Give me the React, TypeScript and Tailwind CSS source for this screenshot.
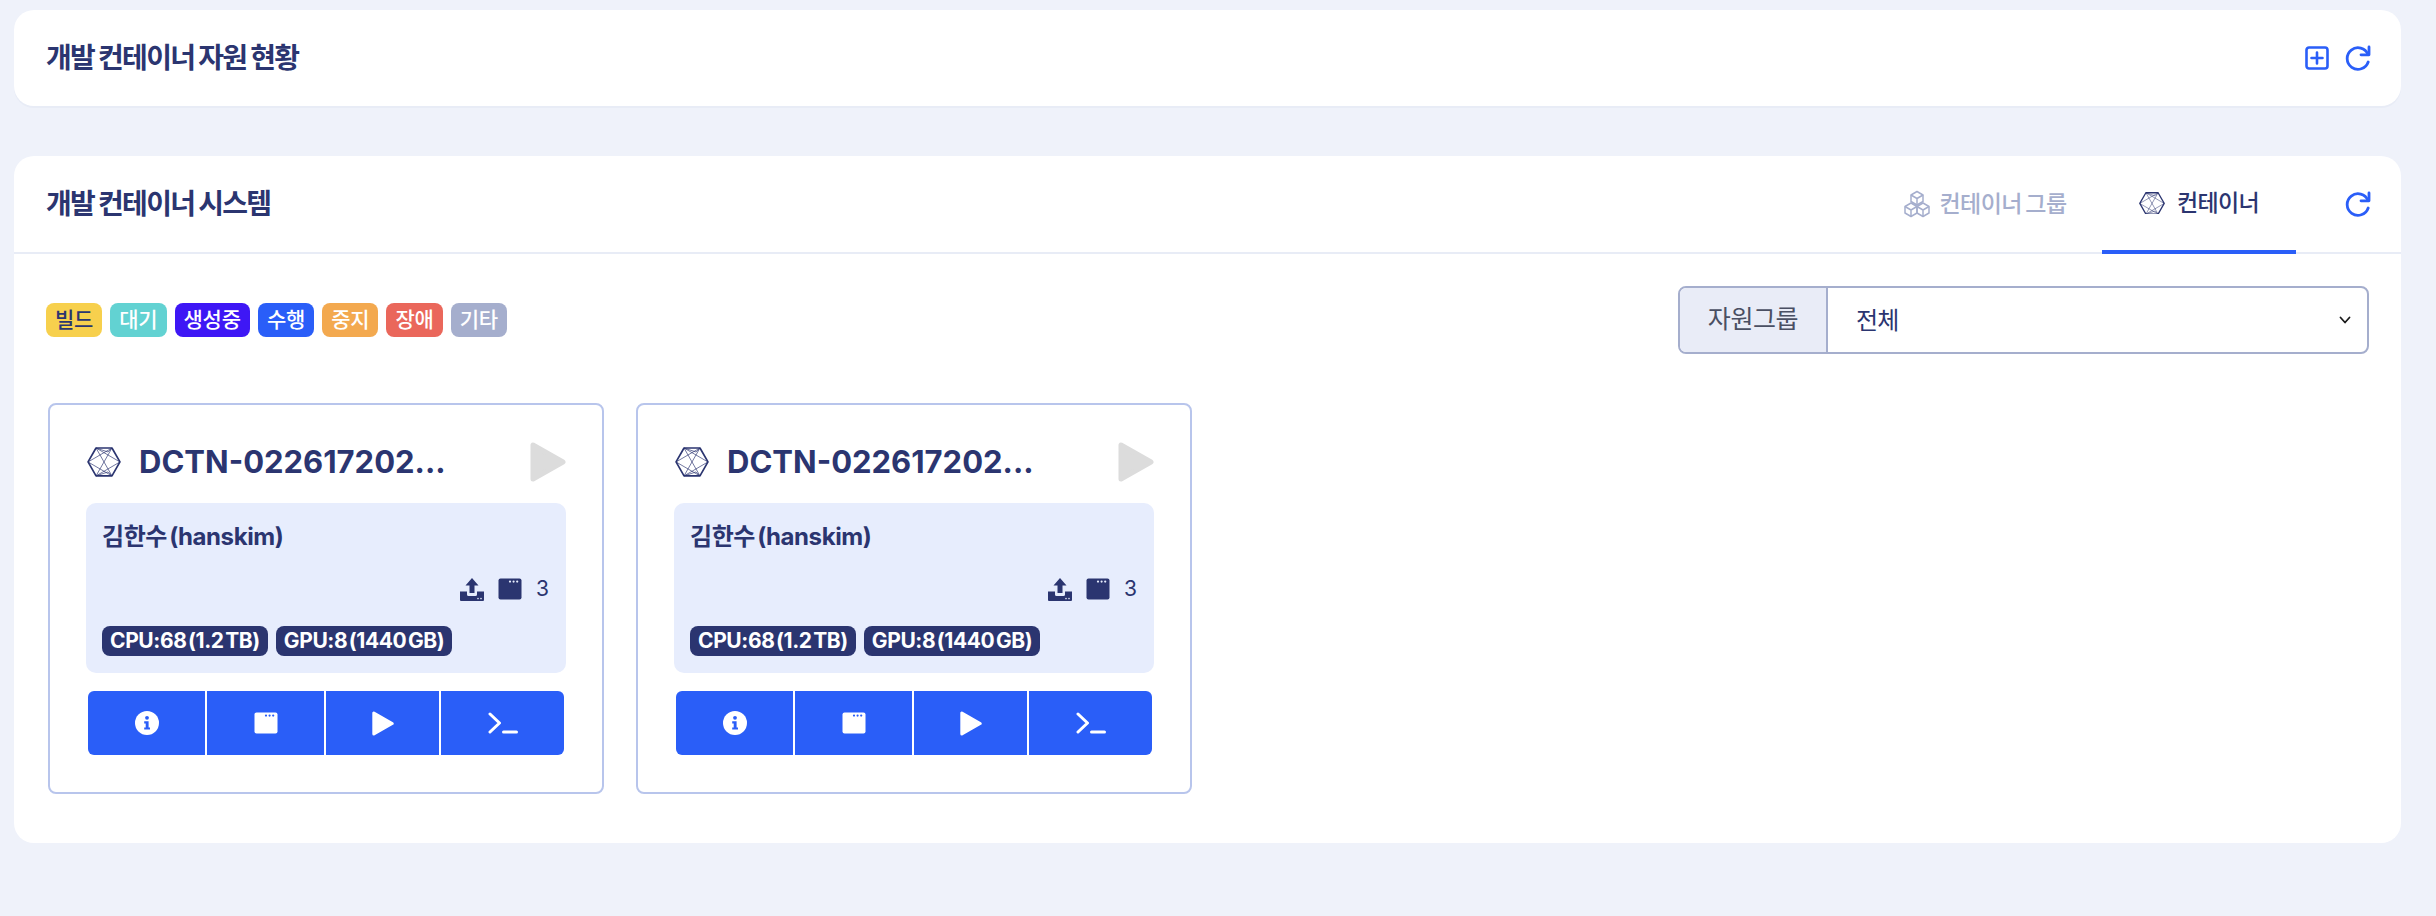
import React from "react";

const FONT = "font-['Inter','Noto_Sans_CJK_KR','Noto_Sans',sans-serif]";

function Refresh() {
  return (
    <svg width="27" height="26" viewBox="0 0 27 26" fill="none" stroke="#2a5ef8" strokeWidth="2.8" strokeLinecap="round" strokeLinejoin="round">
      <path d="M24 9.5A10.8 10.8 0 1 0 24.2 17" />
      <path d="M25 2V9.8H17" />
    </svg>
  );
}

function PlusBox() {
  return (
    <svg width="24" height="24" viewBox="0 0 24 24" fill="none" stroke="#2a5ef8" strokeWidth="2.6" strokeLinecap="round">
      <rect x="1.5" y="1.5" width="21" height="21" rx="2.5" />
      <path d="M12 6.5V17.5M6.5 12H17.5" />
    </svg>
  );
}

function Hex({ size = 34, color = "#2b3570" }: { size?: number; color?: string }) {
  return (
    <svg width={size} height={size * 0.88} viewBox="0 0 34 30" fill="none" stroke={color}>
      <path d="M9 1H25L33 15L25 29H9L1 15Z" strokeWidth="1.7" strokeLinejoin="round" />
      <path d="M9 1L25 29M25 1L9 29M1 15L25 1M1 15L25 29M33 15L9 1M33 15L9 29M9 1L21 5L25 1M9 29L21 25L25 29" strokeWidth="0.9" opacity="0.75" />
    </svg>
  );
}

function Cubes() {
  return (
    <svg width="26" height="28" viewBox="0 0 26 28" fill="none" stroke="#a5aecd" strokeWidth="1.5" strokeLinejoin="round">
      <path d="M13 1.5L19 5V11.5L13 15L7 11.5V5Z" />
      <path d="M7 5L13 8.5L19 5M13 8.5V15" />
      <path d="M7 13L13 16.5V23L7 26.5L1 23V16.5Z" />
      <path d="M1 16.5L7 20L13 16.5M7 20V26.5" />
      <path d="M19 13L25 16.5V23L19 26.5L13 23V16.5Z" />
      <path d="M13 16.5L19 20L25 16.5M19 20V26.5" />
    </svg>
  );
}

function PlayIcon({ w, h, color }: { w: number; h: number; color: string }) {
  return (
    <svg width={w} height={h} viewBox="0 0 36 40" fill={color} stroke={color} strokeWidth="5" strokeLinejoin="round">
      <path d="M3 3V37L33 20Z" />
    </svg>
  );
}

function WindowIcon({ color, dots }: { color: string; dots: string }) {
  return (
    <svg width="24" height="22" viewBox="0 0 24 22">
      <rect x="0.5" y="0.5" width="23" height="21" rx="2" fill={color} />
      <circle cx="12" cy="3.6" r="1.1" fill={dots} />
      <circle cx="15.6" cy="3.6" r="1.1" fill={dots} />
      <circle cx="19.2" cy="3.6" r="1.1" fill={dots} />
    </svg>
  );
}

function Upload() {
  return (
    <svg width="24" height="23" viewBox="0 0 24 23" fill="#2b3570">
      <path d="M12 0L18.5 7.5H14.5V15H9.5V7.5H5.5Z" />
      <path d="M0 13.5H7V16.5Q7 18 8.5 18H15.5Q17 18 17 16.5V13.5H24V22Q24 23 23 23H1Q0 23 0 22Z" />
      <circle cx="18" cy="20.6" r="0.8" fill="#e7edfd" />
      <circle cx="21" cy="20.6" r="0.8" fill="#e7edfd" />
    </svg>
  );
}

function InfoIcon() {
  return (
    <svg width="24" height="24" viewBox="0 0 24 24">
      <circle cx="12" cy="12" r="12" fill="#fff" />
      <circle cx="12" cy="6.8" r="1.9" fill="#2a5ef8" />
      <path d="M9.2 10.2H13.6V16.4H15V18.6H9.2V16.4H10.7V12.4H9.2Z" fill="#2a5ef8" />
    </svg>
  );
}

function TerminalIcon() {
  return (
    <svg width="30" height="22" viewBox="0 0 30 22" fill="none" stroke="#fff" strokeWidth="3" strokeLinecap="round" strokeLinejoin="round">
      <path d="M2 2L11.5 11L2 20" />
      <path d="M15.5 20H28.5" />
    </svg>
  );
}

function Tag({ label, bg, dark }: { label: string; bg: string; dark?: boolean }) {
  return (
    <span className={`flex h-[34px] items-center rounded-[8px] px-[9px] text-[21px] font-medium tracking-[-0.2px] ${bg} ${dark ? "text-[#2b3570]" : "text-white"}`}>
      {label}
    </span>
  );
}

function Chip({ label }: { label: string }) {
  return (
    <span className="flex h-[30px] items-center rounded-[8px] bg-[#2b3570] px-[8px] text-[21px] font-bold tracking-[-0.4px] text-white [word-spacing:-3px]">
      {label}
    </span>
  );
}

function Card() {
  return (
    <div className="flex h-[391px] w-[556px] flex-col rounded-[8px] border-2 border-[#b8c5ec] bg-white pt-[35px]">
      <div className="ml-[37px] mr-[36px] flex h-[44px] items-center">
        <Hex />
        <span className="ml-[18px] whitespace-nowrap text-[31px] font-bold leading-[44px] text-[#2b3570]">DCTN-022617202...</span>
        <span className="ml-auto flex">
          <PlayIcon w={36} h={40} color="#dcdcdc" />
        </span>
      </div>
      <div className="ml-[36px] mr-[36px] mt-[19px] flex h-[170px] flex-col rounded-[10px] bg-[#e7edfd] px-[16px]">
        <div className="mt-[17px] text-[24px] font-bold leading-[34px] tracking-[-0.4px] text-[#2b3570] [word-spacing:-3px]">김한수 (hanskim)</div>
        <div className="mt-[23px] flex items-center justify-end gap-[14px] text-[#2b3570]">
          <Upload />
          <WindowIcon color="#2b3570" dots="#e7edfd" />
          <span className="w-[14px] text-[21px] leading-[24px]">3</span>
        </div>
        <div className="mt-[25px] flex gap-[8px]">
          <Chip label="CPU:68 (1.2 TB)" />
          <Chip label="GPU:8 (1440 GB)" />
        </div>
      </div>
      <div className="ml-[38px] mr-[38px] mt-[18px] flex h-[64px] gap-[2px] overflow-hidden rounded-[6px]">
        <div className="flex w-[117px] items-center justify-center bg-[#2a5ef8]"><InfoIcon /></div>
        <div className="flex w-[117px] items-center justify-center bg-[#2a5ef8]"><WindowIcon color="#fff" dots="#2a5ef8" /></div>
        <div className="flex w-[113px] items-center justify-center bg-[#2a5ef8]"><PlayIcon w={22} h={27} color="#fff" /></div>
        <div className="flex flex-1 items-center justify-center bg-[#2a5ef8]"><TerminalIcon /></div>
      </div>
    </div>
  );
}

export default function App() {
  return (
    <div className={`${FONT} h-[916px] overflow-hidden bg-[#eff2fa] pl-[14px] pr-[35px] pt-[10px]`}>
      <section className="flex h-[96px] items-center justify-between rounded-[20px] bg-white pl-[32px] pr-[30px] shadow-[0_2px_0_#e8ecf6]">
        <h2 className="text-[28px] font-bold tracking-[-1.7px] text-[#2b3570] [word-spacing:-1px]">개발 컨테이너 자원 현황</h2>
        <div className="flex items-center gap-[15px]">
          <PlusBox />
          <Refresh />
        </div>
      </section>

      <section className="mt-[50px] h-[687px] rounded-[20px] bg-white">
        <header className="flex h-[98px] items-stretch border-b-2 border-[#e8ecf6] pl-[32px] pr-[30px]">
          <h2 className="self-center text-[28px] font-bold tracking-[-1.7px] text-[#2b3570] [word-spacing:-1px]">개발 컨테이너 시스템</h2>
          <div className="ml-auto flex items-stretch">
            <div className="flex w-[232px] items-center justify-center gap-[10px] pr-[2px] text-[23px] font-medium tracking-[-0.6px] text-[#a5aecd] [word-spacing:-2px]">
              <Cubes />
              <span>컨테이너 그룹</span>
            </div>
            <div className="-mb-[2px] flex w-[194px] items-center justify-center gap-[12px] border-b-4 border-[#2a5ef8] text-[23px] font-medium tracking-[-0.6px] text-[#2b3570]">
              <Hex size={26} />
              <span>컨테이너</span>
            </div>
          </div>
          <div className="ml-[48px] flex items-center"><Refresh /></div>
        </header>

        <div className="px-[32px] pt-[32px]">
          <div className="flex h-[68px] items-center justify-between">
            <div className="flex gap-[8px]">
              <Tag label="빌드" bg="bg-[#f7d04d]" dark />
              <Tag label="대기" bg="bg-[#62d2d2]" />
              <Tag label="생성중" bg="bg-[#3e17f5]" />
              <Tag label="수행" bg="bg-[#2a5ef8]" />
              <Tag label="중지" bg="bg-[#f3a94f]" />
              <Tag label="장애" bg="bg-[#ea675b]" />
              <Tag label="기타" bg="bg-[#a5aecd]" />
            </div>
            <div className="flex h-[68px] w-[691px] overflow-hidden rounded-[8px] border-2 border-[#a5aecd]">
              <div className="flex w-[148px] items-center justify-center border-r-2 border-[#a5aecd] bg-[#e9ecf7] text-[25px] tracking-[-0.4px] text-[#4a4f63]">자원그룹</div>
              <div className="flex flex-1 items-center justify-between pl-[28px] pr-[16px] text-[24px] tracking-[-0.8px] text-[#2b3570]">
                <span className="mt-[2px]">전체</span>
                <svg width="12" height="8" viewBox="0 0 12 8" fill="none" stroke="#1a1a1a" strokeWidth="1.8" strokeLinecap="round" strokeLinejoin="round"><path d="M1.5 1.5L6 6.5L10.5 1.5" /></svg>
              </div>
            </div>
          </div>
          <div className="ml-[2px] mt-[49px] flex gap-[32px]">
            <Card />
            <Card />
          </div>
        </div>
      </section>
    </div>
  );
}
